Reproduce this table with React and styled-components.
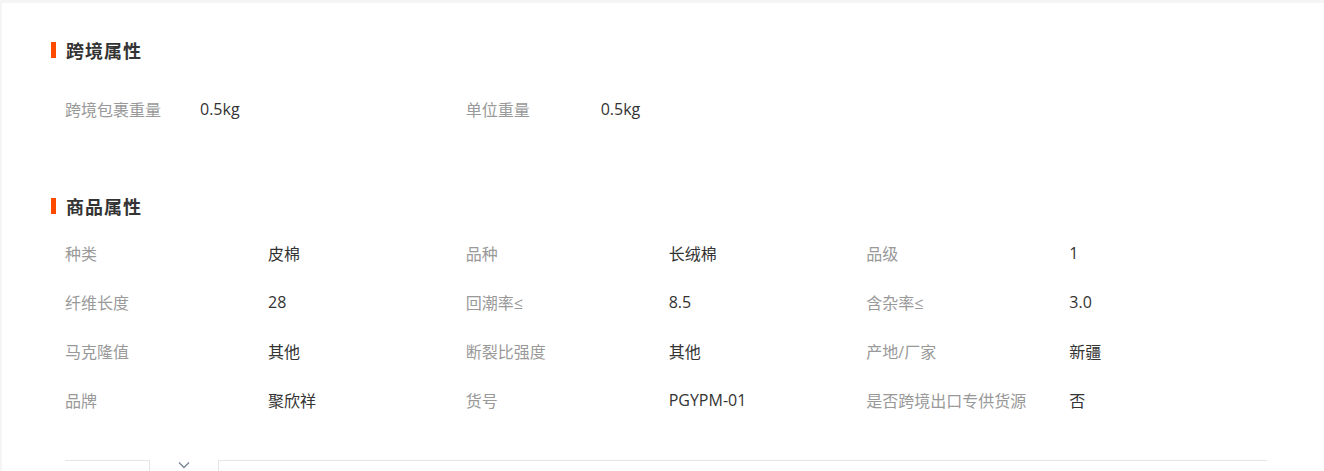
import React from 'react';
import styled, { createGlobalStyle } from 'styled-components';

const GlobalStyle = createGlobalStyle`
body{
  margin:0;
  background:#f5f5f5;
  font-family:"Open Sans","Noto Sans CJK SC",sans-serif;
}
`

const crossBorder = [
  { label: '跨境包裹重量', value: '0.5kg' },
  { label: '单位重量', value: '0.5kg' },
]

const goods = [
  { label: '种类', value: '皮棉' },
  { label: '品种', value: '长绒棉' },
  { label: '品级', value: '1' },
  { label: '纤维长度', value: '28' },
  { label: '回潮率≤', value: '8.5' },
  { label: '含杂率≤', value: '3.0' },
  { label: '马克隆值', value: '其他' },
  { label: '断裂比强度', value: '其他' },
  { label: '产地/厂家', value: '新疆' },
  { label: '品牌', value: '聚欣祥' },
  { label: '货号', value: 'PGYPM-01' },
  { label: '是否跨境出口专供货源', value: '否' },
]

const App = () => {
  return <>
    <GlobalStyle />
    <Card>
      <Section $gap={61}>
        <Heading>跨境属性</Heading>
        <AttrGrid $top={12}>
          {crossBorder.map((item, index) => {
            return <Attr key={index}>
              <Label $width={135}>{item.label}</Label>
              <Value>{item.value}</Value>
            </Attr>
          })}
        </AttrGrid>
      </Section>
      <Section $gap={36}>
        <Heading>商品属性</Heading>
        <AttrGrid $top={0}>
          {goods.map((item, index) => {
            return <Attr key={index}>
              <Label $width={203}>{item.label}</Label>
              <Value>{item.value}</Value>
            </Attr>
          })}
        </AttrGrid>
      </Section>
      <TabBar>
        <TabBox />
        <Toggle>
          <svg width="12" height="8" viewBox="0 0 12 8" fill="none">
            <polyline points="1,1.5 6,6.5 11,1.5" stroke="#7d8797" strokeWidth="1.4" />
          </svg>
        </Toggle>
        <TabRest />
      </TabBar>
    </Card>
  </>;
};

const Card = styled.div`
margin:3px 0 0 2px;
background:#fff;
padding:35px 57px 0 49px;
height:468px;
box-sizing:border-box;
overflow:hidden;
`

const Section = styled.div`
margin-bottom:${p => p.$gap}px;
`

const Heading = styled.h2`
display:flex;
align-items:center;
gap:10px;
margin:0 0 10px 0;
height:24px;
font-size:18px;
font-weight:bold;
letter-spacing:1px;
color:#333;
&::before{
  content:'';
  display:block;
  width:5px;
  height:16px;
  background:#ff4a00;
}
`

const AttrGrid = styled.div`
display:grid;
grid-template-columns:repeat(3, 1fr);
grid-auto-rows:49px;
padding:${p => p.$top}px 0 0 14px;
`

const Attr = styled.div`
display:flex;
align-items:center;
font-size:16px;
`

const Label = styled.div`
width:${p => p.$width}px;
flex-shrink:0;
color:#999;
`

const Value = styled.div`
color:#333;
`

const TabBar = styled.div`
display:flex;
margin-left:14px;
height:30px;
`

const TabBox = styled.div`
width:84px;
border-top:1px solid #e5e5e5;
border-right:1px solid #e5e5e5;
`

const Toggle = styled.div`
width:68px;
display:flex;
justify-content:center;
padding-top:1px;
`

const TabRest = styled.div`
flex:1;
border-top:1px solid #e5e5e5;
border-left:1px solid #e5e5e5;
`

export default App;
